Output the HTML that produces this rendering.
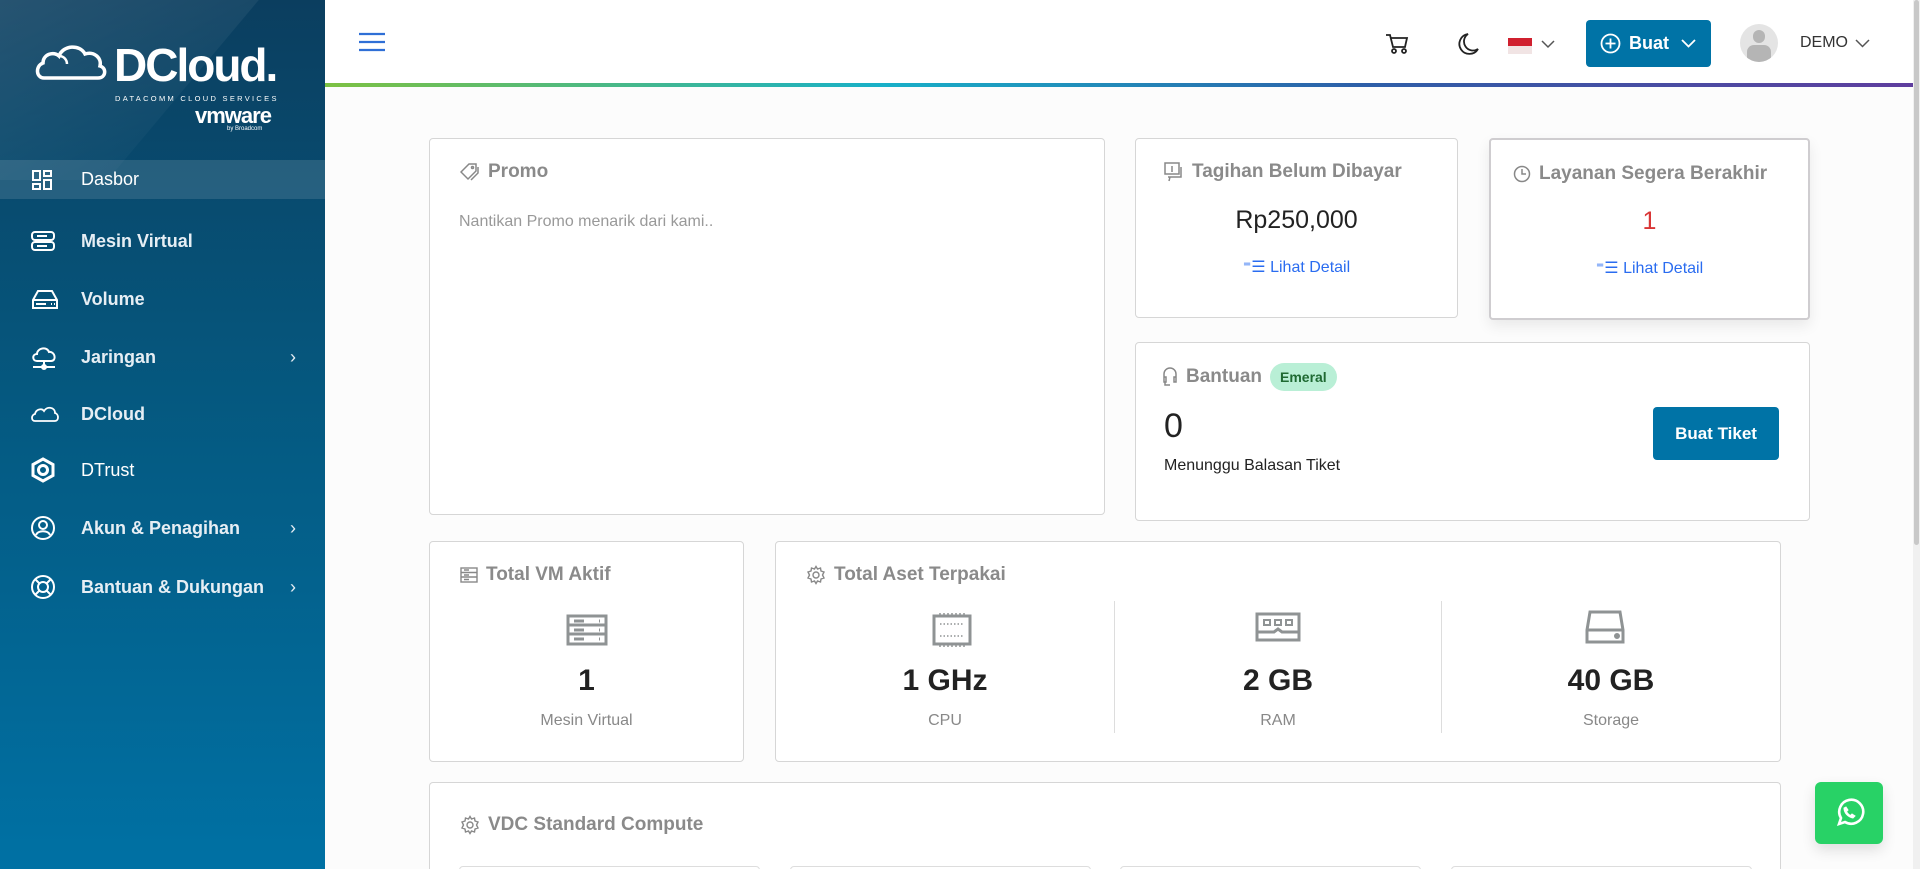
<!DOCTYPE html>
<html style="height:869px;overflow:hidden"><head><meta charset="utf-8"><style>
*{box-sizing:border-box;margin:0;padding:0}
body{width:1920px;height:869px;overflow:hidden;font-family:"Liberation Sans",sans-serif;background:#fcfcfc;position:relative}
.sb{position:absolute;left:0;top:0;width:325px;height:869px;background:linear-gradient(180deg,#0b3e5f 0%,#05587f 45%,#0071a4 100%);overflow:hidden}
.sb .stripe{position:absolute;left:-60px;top:-40px;width:260px;height:220px;background:linear-gradient(135deg,rgba(255,255,255,.12),rgba(255,255,255,.02));transform:skewX(-40deg)}
.logo{position:absolute;left:34px;top:40px;color:#fff}
.mi{position:absolute;left:0;width:325px;height:46px;display:flex;align-items:center;color:#e6eef4;font-size:18px;font-weight:bold}
.mi svg{position:absolute;left:30px}
.mi span{position:absolute;left:81px}
.mi .ch{position:absolute;left:290px;font-weight:normal;font-size:18px}
.top{position:absolute;left:325px;top:0;width:1590px;height:83px;background:#fff}
.gl{position:absolute;left:325px;top:83px;width:1590px;height:4px;background:linear-gradient(90deg,#7dc142,#18b0c8 35%,#2d5fa8 65%,#5f3d9e)}
.card{position:absolute;background:#fff;border:1px solid #d6d6d6;border-radius:4px}
.t{position:absolute;font-size:19px;font-weight:bold;color:#8a8a8a;display:flex;align-items:center;gap:8px}
.c{position:absolute;text-align:center}
.scroll{position:absolute;left:1913px;top:0;width:7px;height:869px;background:#f0f0f0}
.scroll div{position:absolute;left:1px;top:0;width:5px;height:545px;background:#c8c8c8;border-radius:3px}
</style></head><body>
<div class="sb"><div class="stripe"></div>
<div class="logo">
<svg width="74" height="44" viewBox="0 0 74 40" style="position:absolute;left:0;top:0"><path d="M10 36 C2 36 1 24 9 21 C9 12 20 9 25 14 C29 3 46 2 51 12 C60 9 68 16 66 24 C73 26 72 36 64 36 Z" fill="none" stroke="#fff" stroke-width="3.5"/><path d="M25 14 C30 14 33 18 33 22" fill="none" stroke="#fff" stroke-width="2.5"/></svg>
<div style="position:absolute;left:80px;top:-2px;font-size:46px;font-weight:bold;letter-spacing:-2px">DCloud<span>.</span></div>
<div style="position:absolute;left:81px;top:54px;font-size:7.5px;letter-spacing:2.3px;white-space:nowrap">DATACOMM CLOUD SERVICES</div>
<div style="position:absolute;left:161px;top:63px;font-size:22px;font-weight:bold;letter-spacing:-1px">vmware</div>
<div style="position:absolute;left:193px;top:86px;font-size:6px;white-space:nowrap">by Broadcom</div>
</div>
<div class="mi" style="top:160px;background:rgba(255,255,255,.12);height:39px"><svg width="24" height="24" viewBox="0 0 24 24" fill="none" stroke="#fff" stroke-width="2"><rect x="3" y="3" width="7" height="9"/><rect x="14" y="3" width="7" height="5"/><rect x="14" y="12" width="7" height="9"/><rect x="3" y="16" width="7" height="5"/></svg><span style="font-weight:normal;color:#fff">Dasbor</span></div>
<div class="mi" style="top:218px"><svg width="26" height="24" viewBox="0 0 26 24" fill="none" stroke="#fff" stroke-width="2"><rect x="2" y="3" width="22" height="8" rx="3"/><rect x="2" y="13" width="22" height="8" rx="3"/><path d="M7 7h10M7 17h10"/></svg><span>Mesin Virtual</span></div>
<div class="mi" style="top:276px"><svg width="30" height="24" viewBox="0 0 30 24" fill="none" stroke="#fff" stroke-width="2"><path d="M3 13 L8 4 H22 L27 13 V21 H3 Z M3 13 H27"/><path d="M6 17h10M21 17h1M24 17h1"/></svg><span>Volume</span></div>
<div class="mi" style="top:334px"><svg width="28" height="28" viewBox="0 0 28 28" fill="none" stroke="#fff" stroke-width="2"><path d="M7 18 C2 18 2 11 7 11 C7 5 17 3 19 9 C25 8 27 18 21 18 Z M14 18 V23 M3 24 H25"/><circle cx="14" cy="24" r="2" fill="#fff"/></svg><span>Jaringan</span><b class="ch">›</b></div>
<div class="mi" style="top:391px"><svg width="30" height="20" viewBox="0 0 30 20" fill="none" stroke="#fff" stroke-width="1.8"><path d="M5 17 C1 17 1 11 5 10 C6 5 12 4 14 7 C17 2 25 3 25 9 C29 10 29 17 25 17 Z"/></svg><span>DCloud</span></div>
<div class="mi" style="top:447px"><svg width="26" height="28" viewBox="0 0 26 28" fill="none" stroke="#fff" stroke-width="3"><path d="M13 3 L23 8.5 V19.5 L13 25 L3 19.5 V8.5 Z"/><circle cx="13" cy="14" r="4.5"/></svg><span style="font-weight:normal;color:#fff">DTrust</span></div>
<div class="mi" style="top:505px"><svg width="26" height="26" viewBox="0 0 26 26" fill="none" stroke="#fff" stroke-width="2"><circle cx="13" cy="13" r="11"/><circle cx="13" cy="10" r="4"/><path d="M6 20 C8 15 18 15 20 20"/></svg><span>Akun &amp; Penagihan</span><b class="ch">›</b></div>
<div class="mi" style="top:564px"><svg width="26" height="26" viewBox="0 0 26 26" fill="none" stroke="#fff" stroke-width="2"><circle cx="13" cy="13" r="11"/><circle cx="13" cy="13" r="5"/><path d="M5 5l4.5 4.5M21 5l-4.5 4.5M5 21l4.5-4.5M21 21l-4.5-4.5"/></svg><span>Bantuan &amp; Dukungan</span><b class="ch">›</b></div>
</div>

<div class="top">
<svg style="position:absolute;left:33px;top:31px" width="28" height="22" viewBox="0 0 28 22" stroke="#2f6fd6" stroke-width="2.2"><path d="M1 3h26M1 11h26M1 19h26"/></svg>
<svg style="position:absolute;left:1060px;top:33px" width="24" height="22" viewBox="0 0 24 22" fill="none" stroke="#222" stroke-width="1.8"><path d="M1 2h4l3 12h12l2-9H6"/><circle cx="9" cy="18" r="2"/><circle cx="19" cy="18" r="2"/></svg>
<svg style="position:absolute;left:1133px;top:32px" width="22" height="24" viewBox="0 0 22 24" fill="none" stroke="#222" stroke-width="1.8"><path d="M10 2 A10 10 0 1 0 20 17 A8 8 0 0 1 10 2 Z"/></svg>
<div style="position:absolute;left:1183px;top:38px;width:24px;height:8px;background:#d0202f"></div>
<div style="position:absolute;left:1183px;top:46px;width:24px;height:8px;background:#f1e4e4"></div>
<svg style="position:absolute;left:1216px;top:40px" width="14" height="9" viewBox="0 0 14 9" fill="none" stroke="#555" stroke-width="1.5"><path d="M1 1l6 6 6-6"/></svg>
<div style="position:absolute;left:1261px;top:20px;width:125px;height:47px;background:#0073a6;border-radius:4px;color:#fff;font-weight:bold;font-size:18px">
<svg style="position:absolute;left:14px;top:13px" width="21" height="21" viewBox="0 0 21 21" fill="none" stroke="#fff" stroke-width="1.8"><circle cx="10.5" cy="10.5" r="9"/><path d="M10.5 5.5v10M5.5 10.5h10"/></svg>
<span style="position:absolute;left:43px;top:13px">Buat</span>
<svg style="position:absolute;left:95px;top:19px" width="15" height="9" viewBox="0 0 15 9" fill="none" stroke="#fff" stroke-width="1.8"><path d="M1 1l6.5 6.5L14 1"/></svg></div>
<div style="position:absolute;left:1415px;top:24px;width:38px;height:38px;border-radius:50%;background:#e4e4e4;overflow:hidden"><div style="position:absolute;left:13px;top:6px;width:12px;height:13px;border-radius:6px;background:#b5b5b5"></div><div style="position:absolute;left:7px;top:21px;width:24px;height:20px;border-radius:7px;background:#b5b5b5"></div></div>
<span style="position:absolute;left:1475px;top:34px;font-size:16px;color:#333">DEMO</span>
<svg style="position:absolute;left:1530px;top:39px" width="15" height="9" viewBox="0 0 15 9" fill="none" stroke="#555" stroke-width="1.5"><path d="M1 1l6.5 6.5L14 1"/></svg>
</div>
<div class="gl"></div>

<div class="card" style="left:429px;top:138px;width:676px;height:377px">
<div class="t" style="left:30px;top:22px"><svg width="20" height="18" viewBox="0 0 20 18" fill="none" stroke="#888" stroke-width="1.5"><path d="M1 9 L9 1 H16 V8 L8 16 Z"/><circle cx="12.5" cy="4.5" r="1"/><path d="M18 4 V10 L11 17"/></svg>Promo</div>
<div style="position:absolute;left:29px;top:74px;font-size:16px;color:#999">Nantikan Promo menarik dari kami..</div></div>

<div class="card" style="left:1135px;top:138px;width:323px;height:180px">
<div class="t" style="left:28px;top:22px"><svg width="20" height="20" viewBox="0 0 20 20" fill="none" stroke="#888" stroke-width="1.5"><rect x="1" y="1" width="14" height="11"/><path d="M4 15h13V5M6 15l-1 4M8 4v6"/></svg>Tagihan Belum Dibayar</div>
<div class="c" style="left:0;width:321px;top:67px;font-size:25px;color:#222">Rp250,000</div>
<div class="c" style="left:0;width:321px;top:118px;font-size:16px;color:#2a6cf0">⁼☰ Lihat Detail</div></div>

<div class="card" style="left:1489px;top:138px;width:321px;height:182px;border:2px solid #cfcdd0;box-shadow:0 6px 14px rgba(0,0,0,.08)">
<div class="t" style="left:22px;top:23px"><svg width="18" height="18" viewBox="0 0 18 18" fill="none" stroke="#888" stroke-width="1.5"><circle cx="9" cy="9" r="7.5"/><path d="M9 4v5h4"/></svg>Layanan Segera Berakhir</div>
<div class="c" style="left:0;width:317px;top:67px;font-size:25px;color:#d93636">1</div>
<div class="c" style="left:0;width:317px;top:118px;font-size:16px;color:#2a6cf0">⁼☰ Lihat Detail</div></div>

<div class="card" style="left:1135px;top:342px;width:675px;height:179px">
<div class="t" style="left:26px;top:20px"><svg width="16" height="22" viewBox="0 0 16 22" fill="none" stroke="#888" stroke-width="1.5"><path d="M2 13 V8 A6 6 0 0 1 14 8 V13 M2 11h2v5H2zM12 11h2v5h-2zM3 16 V19 H8"/></svg>Bantuan <span style="background:#b9efd6;color:#1f6a33;font-size:14px;border-radius:14px;padding:6px 10px">Emeral</span></div>
<div style="position:absolute;left:28px;top:64px;font-size:34px;color:#222">0</div>
<div style="position:absolute;left:28px;top:114px;font-size:16px;color:#222">Menunggu Balasan Tiket</div>
<div style="position:absolute;left:517px;top:64px;width:126px;height:53px;background:#0073a6;border-radius:4px;color:#fff;font-weight:bold;font-size:17px;text-align:center;line-height:53px;white-space:nowrap">Buat Tiket</div></div>

<div class="card" style="left:429px;top:541px;width:315px;height:221px">
<div class="t" style="left:30px;top:22px"><svg width="18" height="16" viewBox="0 0 18 16" fill="none" stroke="#888" stroke-width="1.4"><rect x="1" y="1" width="16" height="14"/><path d="M1 5.5h16M1 10h16M4 3h5M4 8h5M4 12.5h5"/></svg>Total VM Aktif</div>
<svg style="position:absolute;left:136px;top:72px" width="42" height="32" viewBox="0 0 42 32" fill="none" stroke="#8f9394" stroke-width="3"><rect x="2" y="2" width="38" height="28"/><path d="M2 11h38M2 20h38M8 7h10M8 16h10M8 25h10M33 7h1M33 16h1M33 25h1"/></svg>
<div class="c" style="left:0;width:313px;top:122px;font-size:30px;font-weight:bold;color:#222">1</div>
<div class="c" style="left:0;width:313px;top:170px;font-size:16px;color:#888">Mesin Virtual</div></div>

<div class="card" style="left:775px;top:541px;width:1006px;height:221px">
<div class="t" style="left:30px;top:22px"><svg width="20" height="20" viewBox="0 0 20 20" fill="none" stroke="#888" stroke-width="1.4"><circle cx="10" cy="10" r="3"/><path d="M10 1.5l1.5 2.5 3-1 .5 3 3 1-1.5 3 1.5 3-3 1-.5 3-3-1L10 18.5l-1.5-2.5-3 1-.5-3-3-1L3.5 10 2 7l3-1 .5-3 3 1z"/></svg>Total Aset Terpakai</div>
<div style="position:absolute;left:338px;top:59px;width:1px;height:132px;background:#ddd"></div>
<div style="position:absolute;left:665px;top:59px;width:1px;height:132px;background:#ddd"></div>
<svg style="position:absolute;left:154px;top:70px" width="44" height="36" viewBox="0 0 44 36" fill="none" stroke="#8f9394" stroke-width="3"><rect x="4" y="4" width="36" height="28"/><path d="M10 4V1M14 4V1M18 4V1M22 4V1M26 4V1M30 4V1M34 4V1M10 35V32M14 35V32M18 35V32M22 35V32M26 35V32M30 35V32M34 35V32" stroke-width="1.5"/><path d="M10 12h24M10 24h24" stroke-dasharray="1.5 2" stroke-width="1.5"/></svg>
<div class="c" style="left:0;width:338px;top:122px;font-size:30px;font-weight:bold;color:#222">1 GHz</div>
<div class="c" style="left:0;width:338px;top:170px;font-size:16px;color:#888">CPU</div>
<svg style="position:absolute;left:479px;top:70px" width="46" height="30" viewBox="0 0 46 30" fill="none" stroke="#8f9394" stroke-width="3"><rect x="2" y="2" width="42" height="26"/><rect x="9" y="8" width="6" height="5" stroke-width="2"/><rect x="20" y="8" width="6" height="5" stroke-width="2"/><rect x="31" y="8" width="6" height="5" stroke-width="2"/><path d="M2 20h17l4-3 4 3h17"/></svg>
<div class="c" style="left:339px;width:326px;top:122px;font-size:30px;font-weight:bold;color:#222">2 GB</div>
<div class="c" style="left:339px;width:326px;top:170px;font-size:16px;color:#888">RAM</div>
<svg style="position:absolute;left:807px;top:68px" width="44" height="34" viewBox="0 0 44 34" fill="none" stroke="#8f9394" stroke-width="3"><path d="M4 20 L7 2 H37 L40 20 V32 H4 Z M4 20 H40"/><circle cx="34" cy="26" r="1.5" fill="#8f9394"/></svg>
<div class="c" style="left:666px;width:338px;top:122px;font-size:30px;font-weight:bold;color:#222">40 GB</div>
<div class="c" style="left:666px;width:338px;top:170px;font-size:16px;color:#888">Storage</div></div>

<div class="card" style="left:429px;top:782px;width:1352px;height:100px;border-bottom:none;border-radius:4px 4px 0 0;overflow:hidden">
<div class="t" style="left:30px;top:31px"><svg width="20" height="20" viewBox="0 0 20 20" fill="none" stroke="#888" stroke-width="1.4"><circle cx="10" cy="10" r="3"/><path d="M10 1.5l1.5 2.5 3-1 .5 3 3 1-1.5 3 1.5 3-3 1-.5 3-3-1L10 18.5l-1.5-2.5-3 1-.5-3-3-1L3.5 10 2 7l3-1 .5-3 3 1z"/></svg>VDC Standard Compute</div>
<div style="position:absolute;left:29px;top:83px;width:301px;height:40px;border:1px solid #ddd;border-radius:4px"></div>
<div style="position:absolute;left:360px;top:83px;width:301px;height:40px;border:1px solid #ddd;border-radius:4px"></div>
<div style="position:absolute;left:690px;top:83px;width:301px;height:40px;border:1px solid #ddd;border-radius:4px"></div>
<div style="position:absolute;left:1021px;top:83px;width:301px;height:40px;border:1px solid #ddd;border-radius:4px"></div></div>

<div style="position:absolute;left:1815px;top:782px;width:68px;height:62px;background:#28d266;border-radius:6px;box-shadow:0 6px 14px rgba(0,0,0,.12)">
<svg style="position:absolute;left:18px;top:15px" width="32" height="32" viewBox="0 0 32 32" fill="none" stroke="#fff" stroke-width="2.6"><path d="M6 27 L8 21 A12 12 0 1 1 12 25 Z"/><path d="M11 11c0 5 4 9 9 10l2-2-3-2-1.5 1.5c-2-1-3-2-4-4L15 13l-2-3z" fill="#fff" stroke-width="1"/></svg></div>
<div class="scroll"><div></div></div>
</body></html>
